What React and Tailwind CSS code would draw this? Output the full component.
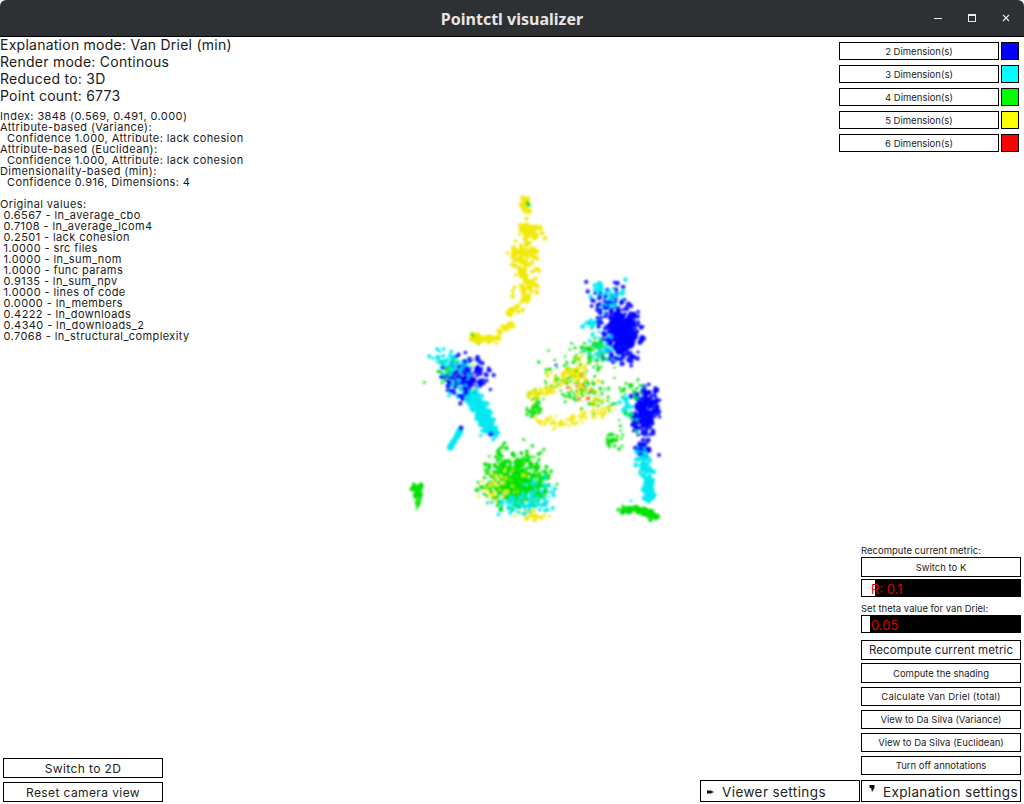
import React, { useMemo } from 'react';

const BLUE = '#0000ff';
const CYAN = '#00e8f0';
const GREEN = '#00e000';
const YELLOW = '#f0e800';
const RED = '#ff2020';

const makeRng = (seed) => {
  let a = seed;
  return () => {
    a |= 0;
    a = (a + 0x6d2b79f5) | 0;
    let t = Math.imul(a ^ (a >>> 15), 1 | a);
    t = (t + Math.imul(t ^ (t >>> 7), 61 | t)) ^ t;
    return ((t ^ (t >>> 14)) >>> 0) / 4294967296;
  };
};

// blobs: [cx, cy, rx, ry, rotation, count, colour, radius]
const BLOBS = [
  [450, 364, 11, 7, 0.5, 70, CYAN, 1.8],
  [466, 378, 11, 12, 0.5, 170, BLUE, 2.1],
  [457, 376, 11, 11, 0.3, 50, CYAN, 1.7],
  [450, 372, 9, 9, 0.3, 26, GREEN, 1.6],
  [466, 372, 8, 8, 0, 18, YELLOW, 1.5],
  [516, 478, 17, 15, 0, 320, GREEN, 2],
  [499, 487, 12, 9, 0, 40, YELLOW, 1.7],
  [520, 503, 14, 7, 0, 80, CYAN, 2],
  [535, 515, 10, 3, 0, 24, YELLOW, 1.9],
  [538, 490, 8, 9, 0, 50, CYAN, 1.8],
  [518, 478, 19, 17, 0, 110, GREEN, 1.7],
  [417, 490, 3, 5, 0, 26, GREEN, 2.1],
  [418, 500, 1.2, 4, 0, 10, GREEN, 1.7],
  [622, 335, 9, 13, 0, 300, BLUE, 2.2],
  [610, 308, 12, 12, 0, 90, BLUE, 2],
  [610, 298, 9, 8, 0, 34, CYAN, 2],
  [598, 288, 2, 3, 0, 14, CYAN, 2],
  [590, 324, 4, 3, 0, 14, CYAN, 2],
  [600, 348, 8, 8, 0, 34, CYAN, 1.7],
  [592, 352, 12, 9, 0, 50, GREEN, 1.6],
  [574, 378, 20, 11, 0, 80, GREEN, 1.5],
  [576, 372, 12, 9, 0, 44, YELLOW, 2],
  [534, 407, 5, 9, 0, 36, GREEN, 1.6],
  [600, 402, 9, 6, 0, 24, GREEN, 1.4],
  [578, 392, 10, 8, 0, 8, RED, 1.6],
  [644, 412, 6, 14, 0.1, 170, BLUE, 2.1],
  [634, 392, 7, 6, 0, 24, GREEN, 1.6],
  [656, 408, 2, 9, 0, 24, BLUE, 2.1],
  [626, 405, 4, 5, 0, 14, CYAN, 2],
  [612, 441, 4, 4, 0, 18, GREEN, 1.8],
  [628, 425, 5, 10, 0, 18, GREEN, 1.6],
];

// strokes: [polyline, spread, count, colour, radius]
const STROKES = [
  [[[525, 198], [523, 204], [529, 216]], 2, 24, YELLOW, 2.2],
  [[[526, 228], [534, 232], [526, 250], [522, 262], [531, 280], [527, 297]], 7, 170, YELLOW, 2.3],
  [[[527, 297], [513, 310], [503, 315]], 3.5, 28, YELLOW, 2.2],
  [[[512, 322], [497, 337], [480, 340], [474, 336]], 3.2, 70, YELLOW, 2.2],
  [[[471, 335], [475, 337]], 0.6, 6, GREEN, 1.8],
  [[[478, 343], [479, 343]], 0.4, 3, GREEN, 1.8],
  [[[527, 201], [528, 206]], 0.6, 5, GREEN, 1.8],
  [[[470, 392], [481, 410], [491, 433]], 4.5, 260, CYAN, 2.1],
  [[[450, 448], [461, 429]], 0.5, 50, CYAN, 2.6],
  [[[641, 450], [648, 480], [651, 500]], 3.2, 120, CYAN, 2.3],
  [[[623, 511], [640, 509], [657, 517]], 2.8, 90, GREEN, 2.1],
  [[[528, 395], [545, 392], [562, 382]], 4, 50, YELLOW, 1.6],
  [[[536, 420], [560, 424], [582, 418], [606, 412]], 5, 90, YELLOW, 1.5],
  [[[575, 385], [590, 400], [606, 412]], 6, 30, YELLOW, 1.4],
  [[[560, 395], [580, 398], [600, 385]], 6, 40, GREEN, 1.4],
  [[[582, 352], [600, 340]], 3, 20, GREEN, 1.6],
  [[[640, 445], [646, 452]], 4, 30, BLUE, 2],
];

// single points that stand on their own
const DOTS = [
  [491, 434, 2.6, BLUE],
  [461, 428, 2.5, BLUE],
  [433, 358, 1.6, CYAN],
  [451, 448, 2.6, CYAN],
  [505, 443, 1.8, GREEN],
  [642, 337, 2.2, BLUE],
  [638, 352, 1.6, BLUE],
  [659, 455, 2, BLUE],
  [619, 449, 2, GREEN],
  [631, 501, 1.5, CYAN],
  [556, 365, 1.6, BLUE],
];

const makePoints = () => {
  const rng = makeRng(3848);
  const gauss = () => (rng() + rng() + rng() - 1.5) / 0.5 / 1.1;
  const points = [];
  BLOBS.forEach(([cx, cy, rx, ry, rot, count, color, r]) => {
    for (let i = 0; i < count; i++) {
      const dx = gauss() * rx;
      const dy = gauss() * ry;
      points.push({
        x: cx + dx * Math.cos(rot) - dy * Math.sin(rot),
        y: cy + dx * Math.sin(rot) + dy * Math.cos(rot),
        r: r * (0.75 + rng() * 0.5),
        color,
      });
    }
  });
  STROKES.forEach(([line, spread, count, color, r]) => {
    for (let i = 0; i < count; i++) {
      const t = rng() * (line.length - 1);
      const seg = Math.min(Math.floor(t), line.length - 2);
      const f = t - seg;
      points.push({
        x: line[seg][0] + (line[seg + 1][0] - line[seg][0]) * f + gauss() * spread,
        y: line[seg][1] + (line[seg + 1][1] - line[seg][1]) * f + gauss() * spread * 0.7,
        r: r * (0.75 + rng() * 0.4),
        color,
      });
    }
  });
  for (let i = points.length - 1; i > 0; i--) {
    const j = Math.floor(rng() * (i + 1));
    [points[i], points[j]] = [points[j], points[i]];
  }
  DOTS.forEach(([x, y, r, color]) => points.push({ x, y, r, color }));
  return points;
};

const ScatterPlot = () => {
  const points = useMemo(makePoints, []);
  return (
    <svg className="absolute left-0 top-0" width="1024" height="804" viewBox="0 0 1024 804">
      <defs>
        <filter id="soft" filterUnits="userSpaceOnUse" x="380" y="180" width="320" height="360">
          <feGaussianBlur stdDeviation="0.8" />
        </filter>
      </defs>
      <g filter="url(#soft)">
        {points.map((p, i) => (
          <circle key={i} cx={p.x.toFixed(1)} cy={p.y.toFixed(1)} r={p.r.toFixed(2)} fill={p.color} fillOpacity="0.88" />
        ))}
      </g>
    </svg>
  );
};

const TitleBar = () => (
  <div className="relative z-10 flex h-[37px] shrink-0 items-center justify-center rounded-t-[6px] border-b border-black bg-[#2e3134] pt-px">
    <span className="font-['Noto_Sans',sans-serif] text-[16px] font-bold text-[#e6e6e6]">Pointctl visualizer</span>
    <div className="absolute right-0 top-0 flex h-[36px] items-center">
      <svg width="10" height="10" viewBox="0 0 10 10" className="mr-[24px]">
        <rect x="1" y="5" width="8" height="1" fill="#ececec" />
      </svg>
      <svg width="10" height="10" viewBox="0 0 10 10" className="mr-[24px]">
        <rect x="1.5" y="1.5" width="7" height="7" fill="none" stroke="#ececec" strokeWidth="1" />
        <rect x="1" y="1" width="8" height="2" fill="#ececec" />
      </svg>
      <svg width="10" height="10" viewBox="0 0 10 10" className="mr-[13px]">
        <path d="M2 2 L8 8 M8 2 L2 8" stroke="#ececec" strokeWidth="1.1" />
      </svg>
    </div>
  </div>
);

const Btn = ({ h = 'h-[19px]', size = 'text-[9.5px]', className = '', children }) => (
  <div className={`flex w-40 shrink-0 items-center justify-center border border-black bg-white pt-px text-[#222] ${h} ${size} ${className}`}>
    {children}
  </div>
);

const DimRow = ({ label, swatch }) => (
  <div className="flex gap-[2px]">
    <Btn h="h-[18px]">
      <span className="mt-[2px]">{label}</span>
    </Btn>
    <div className={`h-[18px] w-[18px] border border-black ${swatch}`} />
  </div>
);

const Slider = ({ handle, children }) => (
  <div className="relative flex h-[18px] w-40 items-center bg-black">
    <div className={`ml-px h-[16px] bg-white ${handle}`} />
    <span className="absolute left-[10px] pt-[2px] text-[13px] leading-none text-[#e00000]">{children}</span>
  </div>
);

const ORIGINAL_VALUES = [
  '0.6567 - ln_average_cbo',
  '0.7108 - ln_average_lcom4',
  '0.2501 - lack cohesion',
  '1.0000 - src files',
  '1.0000 - ln_sum_nom',
  '1.0000 - func params',
  '0.9135 - ln_sum_npv',
  '1.0000 - lines of code',
  '0.0000 - ln_members',
  '0.4222 - ln_downloads',
  '0.4340 - ln_downloads_2',
  '0.7068 - ln_structural_complexity',
];

const LeftColumn = () => (
  <div className="flex flex-col justify-between pb-[2px]">
    <div className="text-[#1a1a1a]">
      <div className="-mt-px text-[14px] leading-[17px] tracking-[0.25px]">
        <div>Explanation mode: Van Driel (min)</div>
        <div>Render mode: Continous</div>
        <div>Reduced to: 3D</div>
        <div>Point count: 6773</div>
      </div>
      <div className="mt-[7px] whitespace-pre text-[11px] leading-[11px] tracking-[0.4px]">
        <div>Index: 3848 (0.569, 0.491, 0.000)</div>
        <div>Attribute-based (Variance):</div>
        <div>{'  Confidence 1.000, Attribute: lack cohesion'}</div>
        <div>Attribute-based (Euclidean):</div>
        <div>{'  Confidence 1.000, Attribute: lack cohesion'}</div>
        <div>Dimensionality-based (min):</div>
        <div>{'  Confidence 0.916, Dimensions: 4'}</div>
        <div className="mt-[11px]">Original values:</div>
        {ORIGINAL_VALUES.map((line) => (
          <div key={line}>{' ' + line}</div>
        ))}
      </div>
    </div>
    <div className="ml-[3px] flex flex-col gap-[4px]">
      <Btn size="text-[12px]" h="h-[20px]" className="tracking-[0.4px]">Switch to 2D</Btn>
      <Btn size="text-[12px]" h="h-[20px]" className="tracking-[0.4px]">Reset camera view</Btn>
    </div>
  </div>
);

const RightColumn = () => (
  <div className="flex flex-col items-end justify-between pb-[2px] pr-[3px] pt-[5px]">
    <div className="mr-[2px] flex flex-col gap-[5px]">
      <DimRow label="2 Dimension(s)" swatch="bg-[#0000ff]" />
      <DimRow label="3 Dimension(s)" swatch="bg-[#00ffff]" />
      <DimRow label="4 Dimension(s)" swatch="bg-[#00ff00]" />
      <DimRow label="5 Dimension(s)" swatch="bg-[#ffff00]" />
      <DimRow label="6 Dimension(s)" swatch="bg-[#ff0000]" />
    </div>
    <div className="flex flex-col items-end">
      <div className="flex w-40 flex-col">
        <div className="h-[13px] text-[9.5px] leading-[13px] text-[#222]">Recompute current metric:</div>
        <Btn h="h-[20px]">
          <span className="mt-[2px]">Switch to K</span>
        </Btn>
        <div className="mt-[2px]">
          <Slider handle="w-[13px]">R: 0.1</Slider>
        </div>
        <div className="mt-[5px] h-[13px] text-[9.5px] leading-[13px] text-[#222]">Set theta value for van Driel:</div>
        <Slider handle="w-[8px]">0.05</Slider>
        <div className="mt-[7px] flex flex-col gap-[3px]">
          <Btn h="h-[20px]" size="text-[11.5px]" className="tracking-[0.1px]">Recompute current metric</Btn>
          <Btn h="h-[20px]">
            <span className="mt-px">Compute the shading</span>
          </Btn>
        </div>
        <div className="mt-[4px] flex flex-col gap-[4px]">
          <Btn className="tracking-[0.2px]">Calculate Van Driel (total)</Btn>
          <Btn>View to Da Silva (Variance)</Btn>
          <Btn>View to Da Silva (Euclidean)</Btn>
          <Btn>Turn off annotations</Btn>
        </div>
      </div>
      <div className="mt-[5px] flex gap-[1px]">
        <Btn h="h-[22px]" size="text-[13.5px]" className="justify-start pl-[6px] tracking-[0.4px]">
          <svg width="8" height="6" viewBox="0 0 8 6" className="mr-[7px] shrink-0">
            <path d="M0 1.5 H3.5 L7 3 L3.5 4.5 H0 Z" fill="#111" />
          </svg>
          <span className="mt-px">Viewer settings</span>
        </Btn>
        <Btn h="h-[22px]" size="text-[13.5px]" className="justify-start pl-[7px] tracking-[0.35px]">
          <svg width="6" height="8" viewBox="0 0 6 8" className="mb-[6px] mr-[8px] shrink-0">
            <path d="M0.5 0 H5.5 V3 L3 7 L2 3 H0.5 Z" fill="#111" />
          </svg>
          <span className="mt-px">Explanation settings</span>
        </Btn>
      </div>
    </div>
  </div>
);

export default function App() {
  return (
    <div className="flex h-[804px] w-[1024px] flex-col overflow-hidden bg-white font-['Inter',sans-serif]">
      <TitleBar />
      <div className="relative flex-1">
        <div className="absolute -top-[37px] left-0">
          <ScatterPlot />
        </div>
        <div className="relative flex h-full justify-between">
          <LeftColumn />
          <RightColumn />
        </div>
      </div>
    </div>
  );
}
